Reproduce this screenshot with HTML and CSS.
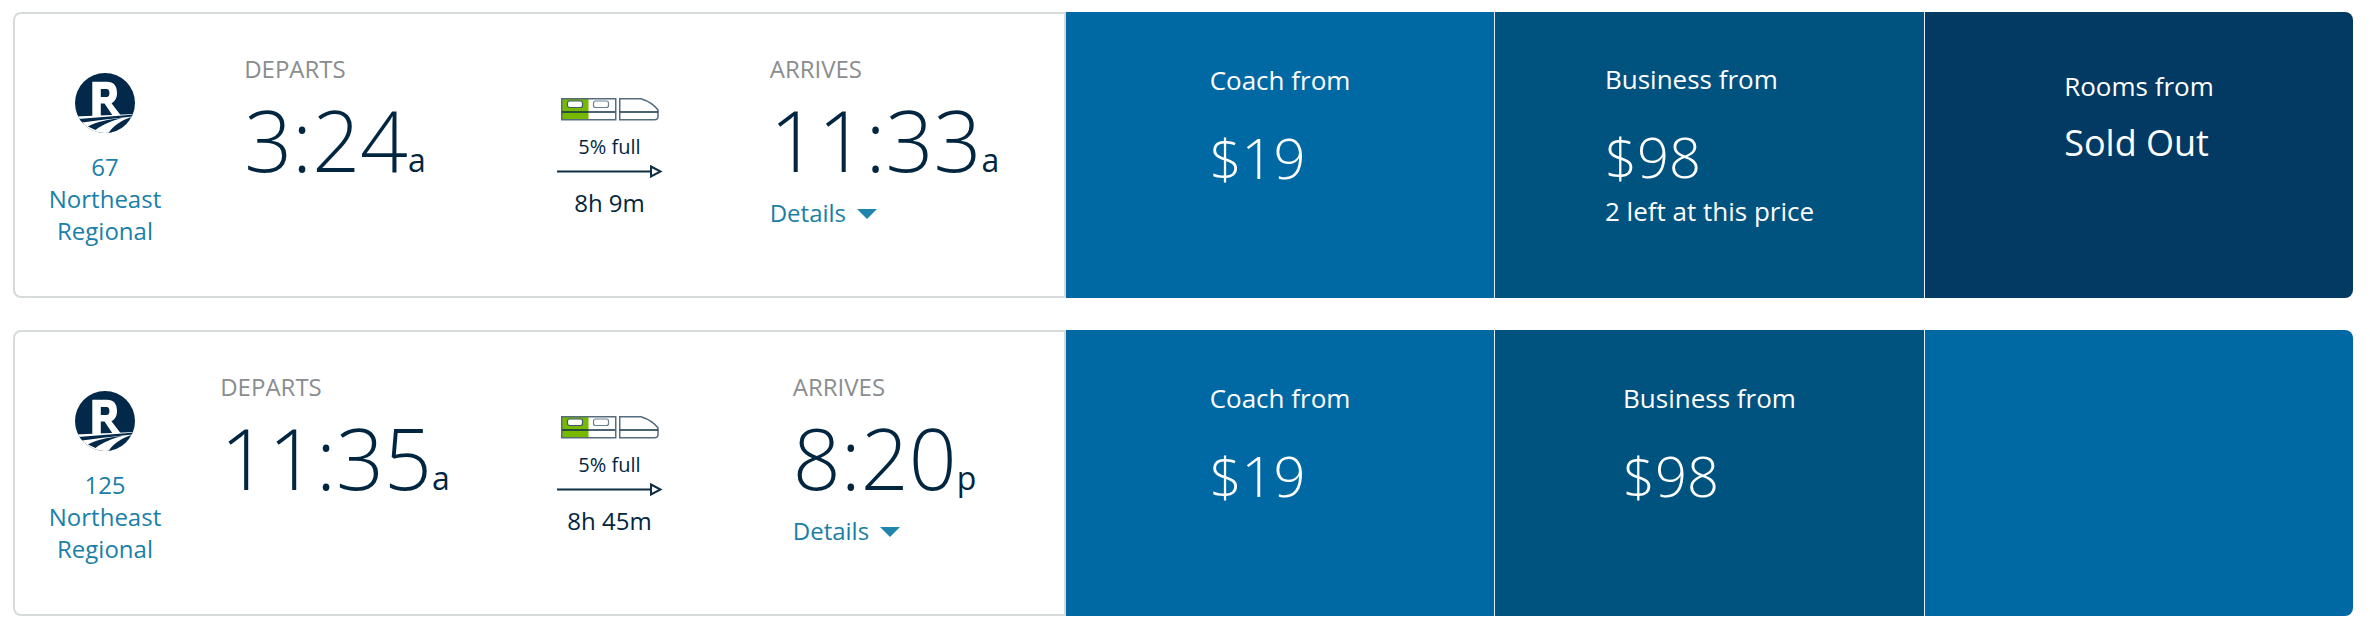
FILE: index.html
```html
<!DOCTYPE html>
<html lang="en">
<head>
<meta charset="utf-8">
<title>Trains</title>
<link rel="stylesheet" href="styles.css">
</head>
<body>
<svg class="defs" width="0" height="0" aria-hidden="true">
  <defs>
    <clipPath id="disc"><circle cx="30" cy="30" r="30"/></clipPath>
    <symbol id="logo" viewBox="0 0 60 60">
      <g clip-path="url(#disc)">
        <rect width="60" height="60" fill="#02284a"/>
        <path fill="#fff" fill-rule="evenodd" d="M17.300 8.700H32C38.500 8.700 42 12.500 42 20 42 25 40 28.500 36.500 30.200L47 44H38.600L29.500 30.500H25.800V44H17.300ZM25.800 16V24H31.500C33.500 24 34.400 22.500 34.400 20 34.400 17.500 33.500 16 31.500 16Z"/>
        <path fill="#fff" d="M0 43.500 60 41V60H0Z"/>
        <path fill="#02284a" d="M3 46 60 41.500 57 43.500 30 46.500 7 49.500Z"/>
        <path fill="#02284a" d="M13 53.500C22 48.500 33 46.500 47 45 38 47.500 28 51 20.500 57Z"/>
        <path fill="#02284a" d="M33.500 60C38 53 46 47.500 56 44 54 50 46 57 38 60Z"/>
      </g>
    </symbol>
    <symbol id="train" viewBox="0 0 98 23">
      <rect x="0.500" y="0.500" width="27" height="21.500" fill="#76b900"/>
      <rect x="0.750" y="0.750" width="54" height="21" fill="none" stroke="#566c7c" stroke-width="1.500"/>
      <path d="M1 14H54" stroke="#0f2f45" stroke-width="1.500"/>
      <rect x="6.500" y="3" width="15" height="6.500" rx="2" fill="#fff" stroke="#3f5a6c" stroke-width="1.200"/>
      <rect x="32.500" y="3" width="15" height="6.500" rx="2" fill="#fff" stroke="#6c8090" stroke-width="1.200"/>
      <path d="M58.750 .75H80C87 3 93 6.500 97 12V18.500C97 20.500 95.500 21.750 93.500 21.750H58.750Z" fill="none" stroke="#566c7c" stroke-width="1.500"/>
      <path d="M59 14H97" stroke="#0f2f45" stroke-width="1.500"/>
    </symbol>
    <symbol id="arrow" viewBox="0 0 106 13">
      <path d="M0 6.500H94" stroke="#0f2f45" stroke-width="2"/>
      <path d="M94 1.500 103.500 6.500 94 11.500Z" fill="#fff" stroke="#0f2f45" stroke-width="2"/>
    </symbol>
  </defs>
</svg>

<main class="list">
  <article class="trip">
    <section class="info">
      <div class="col col-train">
        <svg class="logo"><use href="#logo"/></svg>
        <a class="train-name">67<br>Northeast<br>Regional</a>
      </div>
      <div class="col col-time">
        <div class="time-box">
          <div class="label">DEPARTS</div>
          <div class="time">3:24<span class="ampm">a</span></div>
        </div>
      </div>
      <div class="col col-mid">
        <svg class="train"><use href="#train"/></svg>
        <div class="full">5% full</div>
        <svg class="arrow"><use href="#arrow"/></svg>
        <div class="duration">8h 9m</div>
      </div>
      <div class="col col-time">
        <div class="time-box">
          <div class="label">ARRIVES</div>
          <div class="time">11:33<span class="ampm">a</span></div>
          <a class="details">Details<span class="caret"></span></a>
        </div>
      </div>
    </section>
    <section class="fares">
      <div class="fare coach"><div class="fare-box">
        <div class="fare-name">Coach from</div>
        <div class="price">$19</div>
      </div></div>
      <div class="fare business up"><div class="fare-box">
        <div class="fare-name">Business from</div>
        <div class="price">$98</div>
        <div class="left">2 left at this price</div>
      </div></div>
      <div class="fare rooms"><div class="fare-box">
        <div class="fare-name">Rooms from</div>
        <div class="sold">Sold Out</div>
      </div></div>
    </section>
  </article>

  <article class="trip">
    <section class="info">
      <div class="col col-train">
        <svg class="logo"><use href="#logo"/></svg>
        <a class="train-name">125<br>Northeast<br>Regional</a>
      </div>
      <div class="col col-time">
        <div class="time-box">
          <div class="label">DEPARTS</div>
          <div class="time">11:35<span class="ampm">a</span></div>
        </div>
      </div>
      <div class="col col-mid">
        <svg class="train"><use href="#train"/></svg>
        <div class="full">5% full</div>
        <svg class="arrow"><use href="#arrow"/></svg>
        <div class="duration">8h 45m</div>
      </div>
      <div class="col col-time">
        <div class="time-box">
          <div class="label">ARRIVES</div>
          <div class="time">8:20<span class="ampm">p</span></div>
          <a class="details">Details<span class="caret"></span></a>
        </div>
      </div>
    </section>
    <section class="fares">
      <div class="fare coach"><div class="fare-box">
        <div class="fare-name">Coach from</div>
        <div class="price">$19</div>
      </div></div>
      <div class="fare business"><div class="fare-box">
        <div class="fare-name">Business from</div>
        <div class="price">$98</div>
      </div></div>
      <div class="fare coach"></div>
    </section>
  </article>
</main>
</body>
</html>
```

FILE: styles.css
```css
* { box-sizing: border-box; }
html, body { margin: 0; background: #fff; }
body {
  font-family: "Open Sans", "Noto Sans", sans-serif;
  color: #02263f;
  padding: 12px 17px 0 13px;
}
.defs { position: absolute; }
.list { display: flex; flex-direction: column; gap: 32px; }
.trip { display: flex; height: 286px; }

.info {
  width: 1053px;
  display: grid;
  grid-template-columns: 180px 280px 269px 281px;
  border: 2px solid #d6dada;
  border-radius: 8px 0 0 8px;
  background: #fff;
}
.col { display: flex; flex-direction: column; align-items: center; }

.col-train { padding-top: 59px; }
.logo { width: 60px; height: 60px; display: block; }
.train-name {
  margin-top: 18px;
  text-align: center;
  font-size: 24px;
  line-height: 32px;
  color: #1a7fa8;
}

.col-time { padding-top: 39px; }
.label { font-size: 24px; line-height: 32px; color: #8a8d8f; font-weight: 400; }
.time {
  font-size: 84px;
  font-weight: 300;
  line-height: 84px;
  margin-top: 13px;
  white-space: nowrap;
  color: #02263f;
}
.ampm { font-size: 32px; font-weight: 400; line-height: 1; }
.details {
  display: flex;
  align-items: center;
  gap: 11px;
  font-size: 24px;
  line-height: 32px;
  color: #1a7fa8;
  margin-top: 15px;
}
.caret {
  width: 0; height: 0;
  border-left: 10px solid transparent;
  border-right: 10px solid transparent;
  border-top: 10px solid #1f85ad;
  margin-top: 2px;
}

.col-mid { padding-top: 84px; }
.train { width: 98px; height: 23px; display: block; }
.full { font-size: 20px; line-height: 28px; margin-top: 12px; }
.arrow { width: 106px; height: 13px; display: block; margin-top: 4px; }
.duration { font-size: 24px; line-height: 30px; margin-top: 10px; }

.fares { flex: 1; display: grid; grid-template-columns: 429px 430px 1fr; color: #fff; border-radius: 0 8px 8px 0; overflow: hidden; }
.fare { display: flex; justify-content: center; padding-top: 52px; border-right: 1px solid #e6eff5; }
.fare:last-child { border-right: 0; }
.coach { background: #0069a3; }
.business { background: #00527f; }
.rooms { background: #033a63; padding-top: 58px; }
.up { padding-top: 51px; }
.fare-name { font-size: 26px; line-height: 32px; }
.price { font-size: 56px; font-weight: 300; line-height: 64px; margin-top: 29px; }
.left { font-size: 26px; line-height: 32px; margin-top: 7px; }
.sold { font-size: 36px; line-height: 44px; margin-top: 19px; }
```
